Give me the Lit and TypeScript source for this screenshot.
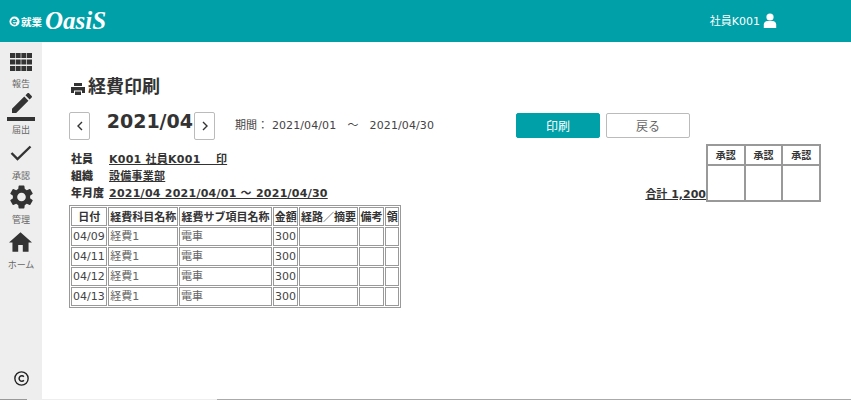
import { LitElement, html, css, svg } from "lit";
import { customElement } from "lit/decorators.js";

const rows = ["04/09", "04/11", "04/12", "04/13"];

@customElement("app-root")
export class AppRoot extends LitElement {
  static styles = css`
    :host { display: block; width: 851px; height: 400px; overflow: hidden; background: #fff; color: #333;
      font-family: "DejaVu Sans", "Noto Sans CJK JP", sans-serif; }
    .header { height: 42px; background: #00a0a8; color: #fff; display: flex; align-items: center; }
    .logo { display: flex; align-items: center; padding-left: 9px; flex: 1; }
    .logo .e { width: 11px; height: 11px; margin-right: 1px; }
    .logo .ja { font: 700 10.500px "Noto Sans CJK JP", sans-serif; margin-right: 3px; }
    .logo .oasis { font: italic 700 25px "Liberation Serif", serif; line-height: 30px; }
    .user { display: flex; align-items: center; gap: 3px; font-size: 11px; padding-right: 74px; margin-top: -2px; }
    .body { display: flex; height: 357px; }
    .side { width: 42px; background: #eeeeee; display: flex; flex-direction: column; align-items: center; box-sizing: border-box; padding-top: 10px; }
    .nav { display: flex; flex-direction: column; align-items: center; font: 9px/11px "Noto Sans CJK JP", sans-serif; color: #666; white-space: nowrap; }
    .nav svg { display: block; flex: none; }
    .n1 { height: 41px; }
    .n1 svg { margin-top: 1px; }
    .n1 div { margin-top: 7px; }
    .n2 { height: 43px; }
    .n2 div { margin-top: 3px; }
    .n3 { height: 45px; }
    .n3 svg { margin-top: 9px; }
    .n3 div { margin-top: 9px; }
    .n4 { height: 45px; }
    .n4 svg { margin-top: 4px; }
    .n4 div { margin-top: 5px; }
    .n5 svg { margin-top: 6px; }
    .n5 div { margin-top: 7px; }
    .copy { margin-top: auto; margin-bottom: 13px; }
    .strip { height: 1px; display: flex; background: #aaa; }
    .strip i { display: block; }
    .strip .s1 { width: 27px; background: #999; }
    .strip .s2 { width: 190px; background: #eee; }
    .main { flex: 1; padding: 33px 0 0 27px; min-width: 0; }
    h1 { margin: 0 0 0 1px; font: 700 18px/24px "DejaVu Sans", "Noto Sans CJK JP", sans-serif; display: flex; align-items: center; color: #333; gap: 2px; }
    h1 svg { margin-top: 3px; }
    .bar { display: flex; align-items: flex-start; margin-top: 13px; height: 33px; }
    .arrow { width: 21px; height: 28px; box-sizing: border-box; border: 1px solid #bbb; border-radius: 2px; background: #fff; display: flex; align-items: center; justify-content: center; }
    .month { width: 104px; text-align: right; box-sizing: border-box; font: 700 19px/18px "DejaVu Sans", sans-serif; color: #333; padding: 0 1px 0 0; }
    .period { font-size: 11px; letter-spacing: 0.1px; line-height: 28px; margin-left: 20px; width: 281px; color: #444; white-space: nowrap; }
    .btn { width: 84px; height: 25px; box-sizing: border-box; border-radius: 2px; font: 12px/23px "Noto Sans CJK JP", sans-serif; text-align: center; margin-top: 1px; }
    .btn.p { background: #00a0a8; color: #fff; border: 1px solid #00a0a8; margin-right: 6px; }
    .btn.b { border: 1px solid #bbb; color: #666; background: #fff; }
    .sheet { display: flex; align-items: flex-end; margin-top: -1px; padding-right: 30px; }
    .info { flex: 1; font-size: 11px; font-weight: 700; color: #333; padding-left: 2px; }
    .line { height: 17px; line-height: 17px; display: flex; }
    .line b { width: 38px; flex: none; }
    .line u { white-space: pre; letter-spacing: 0.25px; }
    .sum { font-size: 11px; font-weight: 700; line-height: 15px; text-decoration: underline; }
    .approve { border-collapse: collapse; border: 2px solid #999; width: 115px; table-layout: fixed; }
    .approve td, .approve th { border: 2px solid #999; padding: 0; text-align: center; font: 700 10px/18px "Noto Sans CJK JP", sans-serif; color: #333; }
    .approve th { height: 18px; }
    .approve td { height: 34px; }
    .detail { border: 1px solid #999; border-spacing: 1px; border-collapse: separate; font-size: 11px; color: #444; margin-top: 3px; table-layout: fixed; width: 332px; }
    .detail td, .detail th { border: 1px solid #999; padding: 0 1px; height: 17px; white-space: nowrap; overflow: hidden; text-align: left; line-height: 17px; }
    .detail th { font: 700 11px/17px "Noto Sans CJK JP", sans-serif; color: #333; text-align: center; }
    .r { text-align: right !important; }
    .w1 { width: 32px; } .w2 { width: 65px; } .w3 { width: 88px; } .w4 { width: 21px; } .w5 { width: 54px; } .w6 { width: 21px; } .w7 { width: 10px; }
    .g { color: #666; }
  `;

  render() {
    return html`
      <div class="header">
        <div class="logo">
          <svg class="e" viewBox="0 0 12 12"><circle cx="6" cy="6" r="5.500" fill="#fff"/><path d="M3 6h5.500M8.500 6a2.700 2.700 0 1 0-.8 2.200" fill="none" stroke="#00a0a8" stroke-width="1.400"/></svg>
          <span class="ja">就業</span><span class="oasis">OasiS</span>
        </div>
        <div class="user"><span>社員K001</span>
          <svg width="14" height="15" viewBox="0 0 14 15"><circle cx="7" cy="4" r="3.600" fill="#fff"/><path d="M.8 15v-3.400C.8 9.300 2.600 8 4.400 8h5.200c1.800 0 3.600 1.300 3.600 3.600V15z" fill="#fff"/></svg>
        </div>
      </div>
      <div class="body">
        <div class="side">
          <div class="nav n1">
            <svg width="22" height="18" viewBox="0 0 22 18" fill="#333">${[0, 5.67, 11.34, 17].flatMap((x) => [0, 6.5, 13].map((y) => svg`<rect x=${x} y=${y} width="5" height="5"/>`))}</svg>
            <div>報告</div>
          </div>
          <div class="nav n2">
            <svg width="28" height="28" viewBox="0 0 28 28" fill="#333"><path transform="translate(5 0) scale(1.110) translate(-3 -3)" d="M3 17.250V21h3.750L17.810 9.940l-3.750-3.750L3 17.250zM20.710 7.040c.39-.39.39-1.020 0-1.410l-2.340-2.340c-.39-.39-1.020-.39-1.410 0l-1.830 1.830 3.750 3.750 1.830-1.830z"/><rect y="24" width="28" height="4"/></svg>
            <div>届出</div>
          </div>
          <div class="nav n3">
            <svg width="22" height="16" viewBox="0 0 22 16" fill="none" stroke="#333" stroke-width="2.400"><path d="M1.500 8l6 6L20.500 1.500"/></svg>
            <div>承認</div>
          </div>
          <div class="nav n4">
            <svg width="23" height="24" viewBox="2.500 2 19 20" fill="#333"><path d="M19.140 12.940c.04-.3.06-.61.06-.94 0-.32-.02-.64-.07-.94l2.030-1.580c.18-.14.23-.41.12-.61l-1.920-3.320c-.12-.22-.37-.29-.59-.22l-2.390.96c-.5-.38-1.030-.7-1.620-.94l-.36-2.540c-.04-.24-.24-.41-.48-.41h-3.840c-.24 0-.43.17-.47.41l-.36 2.540c-.59.24-1.130.57-1.620.94l-2.390-.96c-.22-.08-.47 0-.59.22L2.740 8.870c-.12.21-.08.47.12.61l2.030 1.580c-.05.3-.09.63-.09.94s.02.64.07.94l-2.030 1.580c-.18.14-.23.41-.12.61l1.920 3.320c.12.22.37.29.59.22l2.390-.96c.5.38 1.030.7 1.620.94l.36 2.540c.05.24.24.41.48.41h3.840c.24 0 .44-.17.47-.41l.36-2.540c.59-.24 1.130-.56 1.620-.94l2.390.96c.22.08.47 0 .59-.22l1.920-3.320c.12-.22.07-.47-.12-.61l-2.010-1.580zM12 15.600c-1.980 0-3.600-1.620-3.600-3.600s1.620-3.600 3.600-3.600 3.600 1.620 3.600 3.600-1.620 3.600-3.600 3.600z"/></svg>
            <div>管理</div>
          </div>
          <div class="nav n5">
            <svg width="23" height="20" viewBox="2 3 20 17" fill="#333"><path d="M10 20v-6h4v6h5v-8h3L12 3 2 12h3v8z"/></svg>
            <div>ホーム</div>
          </div>
          <svg class="copy" width="15" height="15" viewBox="0 0 14 14" fill="none" stroke="#222"><circle cx="7" cy="7" r="6.200" stroke-width="1.300"/><path d="M9.200 5.400a2.500 2.500 0 1 0 0 3.200" stroke-width="1.400"/></svg>
        </div>
        <div class="main">
          <h1><svg width="16" height="14" viewBox="0 0 16 14" fill="#333"><path d="M4 1h8v3H4z"/><path d="M1 5h14v6h-3V8.500H4V11H1z"/><path d="M5 9.500h6V13H5z"/></svg>経費印刷</h1>
          <div class="bar">
            <div class="arrow"><svg width="8" height="10" viewBox="0 0 8 10" fill="none" stroke="#333" stroke-width="1.400"><path d="M6 1 2 5l4 4"/></svg></div>
            <div class="month">2021/04</div>
            <div class="arrow"><svg width="8" height="10" viewBox="0 0 8 10" fill="none" stroke="#333" stroke-width="1.400"><path d="M2 1l4 4-4 4"/></svg></div>
            <div class="period">期間： 2021/04/01　～　2021/04/30</div>
            <div class="btn p">印刷</div>
            <div class="btn b">戻る</div>
          </div>
          <div class="sheet">
            <div class="info">
              <div class="line"><b>社員</b><u>K001 社員K001　 印</u></div>
              <div class="line"><b>組織</b><u>設備事業部</u></div>
              <div class="line"><b>年月度</b><u>2021/04 2021/04/01 ～ 2021/04/30</u></div>
            </div>
            <div class="sum">合計 1,200</div>
            <table class="approve">
              <tr><th>承認</th><th>承認</th><th>承認</th></tr>
              <tr><td></td><td></td><td></td></tr>
            </table>
          </div>
          <table class="detail">
            <tr>
              <th class="w1">日付</th><th class="w2">経費科目名称</th><th class="w3">経費サブ項目名称</th><th class="w4">金額</th><th class="w5">経路／摘要</th><th class="w6">備考</th><th class="w7">領</th>
            </tr>
            ${rows.map((d) => html`<tr><td>${d}</td><td class="g">経費1</td><td class="g">電車</td><td class="r">300</td><td></td><td></td><td></td></tr>`)}
          </table>
        </div>
      </div>
      <div class="strip"><i class="s1"></i><i class="s2"></i></div>
    `;
  }
}
